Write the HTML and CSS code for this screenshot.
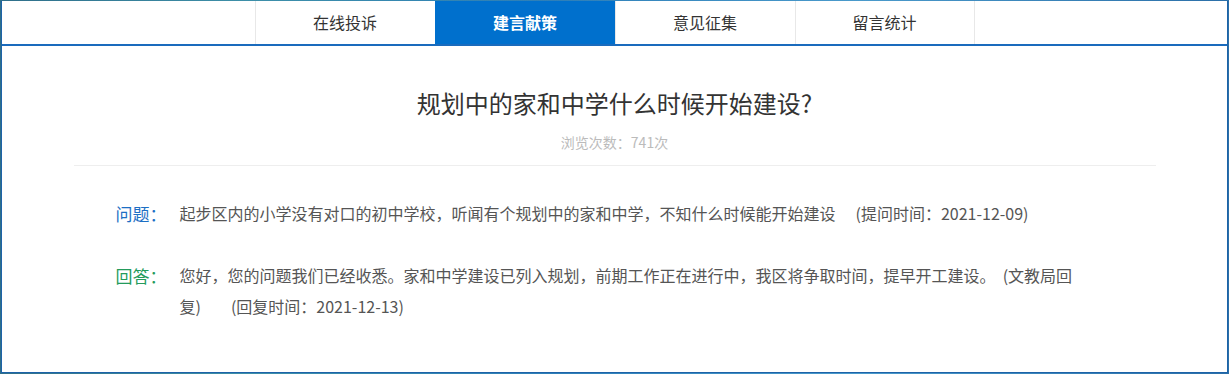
FILE: index.html
```html
<!DOCTYPE html>
<html lang="zh-CN">
<head>
    <meta charset="UTF-8">
    <title>建言献策 - 详情</title>
    <link rel="stylesheet" href="styles.css">
</head>
<body>

<div class="panel">
    <div class="nav">
        <div class="tab">在线投诉</div>
        <div class="tab active">建言献策</div>
        <div class="tab">意见征集</div>
        <div class="tab">留言统计</div>
    </div>

    <div class="detail">
        <div class="detail-head">
            <h1 class="title">规划中的家和中学什么时候开始建设?</h1>
            <div class="views">浏览次数：741次</div>
        </div>

        <div class="qa">
            <div class="qa-row">
                <span class="label ask">问题：</span>
                <p class="qa-text">起步区内的小学没有对口的初中学校，听闻有个规划中的家和中学，不知什么时候能开始建设<span class="time">(提问时间：2021-12-09)</span></p>
            </div>
            <div class="qa-row">
                <span class="label reply">回答：</span>
                <p class="qa-text">您好，您的问题我们已经收悉。家和中学建设已列入规划，前期工作正在进行中，我区将争取时间，提早开工建设。&nbsp; (文教局回复)<span class="time wide">(回复时间：2021-12-13)</span></p>
            </div>
        </div>
    </div>
</div>

</body>
</html>
```

FILE: styles.css
```css
* {
    margin: 0;
    padding: 0;
    box-sizing: border-box;
}

body {
    font-family: "Noto Sans CJK SC", "Liberation Sans", sans-serif;
    background: linear-gradient(90deg, #2f6f8a, #3d8fa8 20%, #2e7fb8 45%, #4a9acb 70%, #2b6fa8);
    color: #555;
    height: 374px;
    overflow: hidden;
}

.panel {
    margin: 1px 1px 0 1px;
    height: 372px;
    background: #fff;
    border: 1px solid #1d63a8;
    border-top: none;
}

/* top tabs */
.nav {
    display: flex;
    justify-content: center;
    height: 45px;
    border-bottom: 2px solid #1a6bbd;
}

.tab {
    width: 180px;
    border-left: 1px solid #e8e8e8;
    font-size: 16px;
    color: #333;
    text-align: center;
    line-height: 43px;
}

.tab:last-child {
    border-right: 1px solid #e8e8e8;
}

.tab.active {
    background: #0070cd;
    border-color: #0070cd;
    color: #fff;
    font-weight: bold;
}

/* article */
.detail {
    width: 1082px;
    margin: 0 auto;
}

.detail-head {
    text-align: center;
    padding: 40px 0 13px;
    border-bottom: 1px solid #eee;
}

.title {
    font-size: 24px;
    font-weight: normal;
    color: #333;
    line-height: 34px;
}

.views {
    font-size: 14px;
    color: #bbb;
    line-height: 20px;
    margin-top: 12px;
}

.qa {
    padding: 32px 0 0 42px;
}

.qa-row {
    display: flex;
    margin-bottom: 31px;
    font-size: 16px;
    line-height: 31px;
}

.label {
    flex: none;
    width: 64px;
    font-size: 17px;
}

.ask {
    color: #1d6fc4;
}

.reply {
    color: #249b5c;
}

.qa-text {
    width: 906px;
    color: #555;
}

.time {
    margin-left: 20px;
}

.time.wide {
    margin-left: 30px;
}
```
